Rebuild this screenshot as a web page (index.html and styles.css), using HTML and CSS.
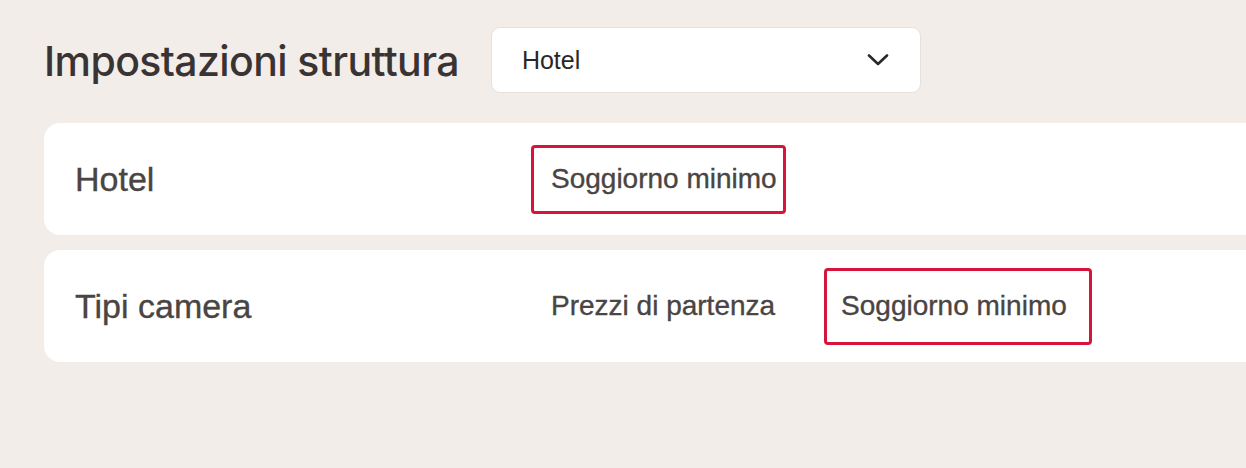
FILE: index.html
```html
<!DOCTYPE html>
<html lang="it">
<head>
<meta charset="utf-8">
<title>Impostazioni struttura</title>
<link rel="stylesheet" href="styles.css">
</head>
<body>
<div class="page">
  <header class="header">
    <h1 class="page-title">Impostazioni struttura</h1>
    <div class="select">
      <span class="select-value">Hotel</span>
      <svg class="chevron" width="22" height="12" viewBox="0 0 22 12" aria-hidden="true">
        <path d="M2 1.5 L11 10 L20 1.5" fill="none" stroke="#2b2928" stroke-width="2.6" stroke-linecap="round" stroke-linejoin="round"/>
      </svg>
    </div>
  </header>
  <section class="cards">
    <div class="card card-hotel">
      <div class="card-title">Hotel</div>
      <nav class="tabs">
        <span class="tab tab-hl tab-hl-a">Soggiorno minimo</span>
      </nav>
    </div>
    <div class="card card-rooms">
      <div class="card-title">Tipi camera</div>
      <nav class="tabs">
        <span class="tab tab-plain">Prezzi di partenza</span>
        <span class="tab tab-hl tab-hl-b">Soggiorno minimo</span>
      </nav>
    </div>
  </section>
</div>
</body>
</html>
```
FILE: styles.css
```css
html, body {
  margin: 0;
  padding: 0;
  background: #f2ede9;
  overflow: hidden;
}
.page {
  padding: 27px 0 0 44px;
  margin-right: -60px;
}
.header {
  display: flex;
  align-items: center;
  gap: 32px;
}
.page-title {
  margin: 0;
  font-family: "Inter", "Liberation Sans", sans-serif;
  font-weight: 500;
  font-size: 41px;
  letter-spacing: -0.6px;
  color: #3a3333;
  line-height: 1;
  padding-top: 2px;
}
.select {
  box-sizing: border-box;
  width: 430px;
  height: 66px;
  background: #ffffff;
  border: 1px solid #e4e1de;
  border-radius: 9px;
  display: flex;
  align-items: center;
  justify-content: space-between;
  padding: 0 31px 0 30px;
}
.select-value {
  font-family: "Liberation Sans", Arial, sans-serif;
  font-size: 25px;
  color: #2b2625;
}
.chevron {
  display: block;
}
.cards {
  margin-top: 30px;
  display: flex;
  flex-direction: column;
  gap: 15px;
}
.card {
  background: #ffffff;
  border-radius: 16px;
  display: flex;
  align-items: center;
  padding-left: 31px;
  font-family: "Liberation Sans", Arial, sans-serif;
  -webkit-text-stroke: 0.35px currentColor;
}
.card-hotel {
  height: 112px;
}
.card-rooms {
  height: 112px;
}
.card-title {
  width: 456px;
  font-size: 34px;
  color: #4a4442;
}
.tabs {
  display: flex;
  align-items: center;
}
.tab {
  box-sizing: border-box;
  display: flex;
  align-items: center;
  font-size: 28px;
  color: #4a4442;
  white-space: nowrap;
}
.tab-plain {
  padding: 0 49px 0 20px;
}
.tab-hl {
  border: 3px solid #d7153c;
  border-radius: 4px;
}
.tab-hl-a {
  height: 69px;
  padding: 0 6px 0 17px;
}
.tab-hl-b {
  height: 77px;
  padding: 0 22px 0 14px;
}
```
